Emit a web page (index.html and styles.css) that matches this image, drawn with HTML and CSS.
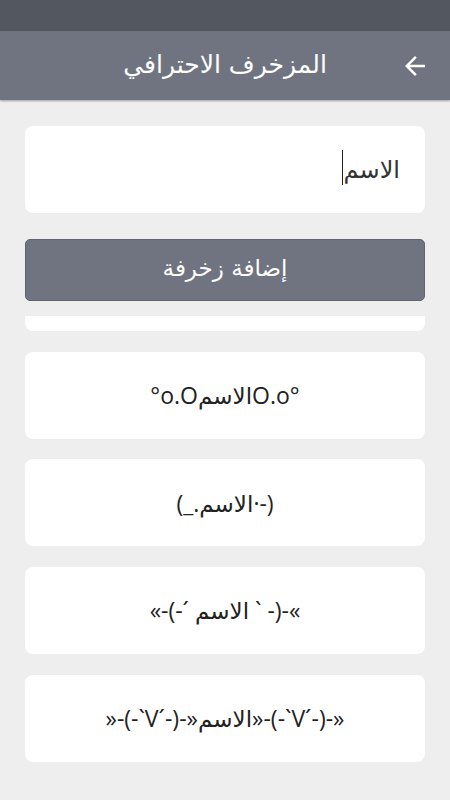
FILE: index.html
```html
<!DOCTYPE html>
<html lang="ar">
<head>
<meta charset="utf-8">
<link rel="stylesheet" href="styles.css">
</head>
<body>
<div class="status"></div>
<header class="appbar">
  <span></span>
  <h1 class="title" dir="rtl">المزخرف الاحترافي</h1>
  <span class="back">
    <svg width="30" height="30" viewBox="0 0 24 24"><path fill="#fff" d="M20 11H7.83l5.59-5.59L12 4l-8 8 8 8 1.41-1.41L7.83 13H20v-2z"/></svg>
  </span>
</header>
<main class="content">
  <div class="field">
    <span class="caret"></span>
    <span class="field-text">الاسم</span>
  </div>
  <button class="add">إضافة زخرفة</button>
  <div class="list">
    <div class="inner">
      <div class="card"></div>
      <div class="card">°o.OالاسمO.o°</div>
      <div class="card">(_.الاسم·-)</div>
      <div class="card">«-(-´ الاسم ` -)-«</div>
      <div class="card">»-(-`V´-)-»الاسم»-(-`V´-)-»</div>
    </div>
  </div>
</main>
</body>
</html>
```
FILE: styles.css
```css
html, body {
  margin: 0;
  padding: 0;
}
body {
  width: 450px;
  height: 800px;
  overflow: hidden;
  background: #eeeeee;
  font-family: "Open Sans", "DejaVu Sans", sans-serif;
}
.status {
  height: 31px;
  background: #53575f;
}
.appbar {
  height: 69px;
  background: #6f7480;
  display: grid;
  grid-template-columns: 1fr auto 1fr;
  align-items: center;
  box-shadow: 0 1px 2px rgba(0, 0, 0, 0.35);
  position: relative;
}
.title {
  margin: 0;
  color: #ffffff;
  font-family: "DejaVu Sans", sans-serif;
  font-weight: normal;
  font-size: 25px;
  line-height: 30px;
  padding-bottom: 2px;
}
.back {
  justify-self: end;
  display: flex;
  padding-right: 20px;
}
.content {
  padding: 0 25px;
}
.field {
  margin-top: 26px;
  height: 87px;
  background: #ffffff;
  border-radius: 8px;
  display: flex;
  justify-content: flex-end;
  align-items: center;
  padding-right: 25px;
  box-sizing: border-box;
}
.caret {
  width: 1px;
  height: 35px;
  background: #222;
  margin-right: 1px;
  margin-top: -4px;
}
.field-text {
  font-family: "DejaVu Sans", sans-serif;
  font-size: 24px;
  color: #333;
  line-height: 30px;
}
.add {
  display: block;
  width: 100%;
  margin-top: 26px;
  height: 62px;
  background: #6f7480;
  border: 1px solid #60646e;
  border-radius: 5px;
  color: #ffffff;
  font-family: "DejaVu Sans", sans-serif;
  font-size: 23px;
  padding: 0 0 4px;
}
.list {
  margin-top: 15px;
  height: 484px;
  overflow: hidden;
}
.inner {
  display: flex;
  flex-direction: column;
  gap: 20.67px;
  margin-top: -72px;
}
.card {
  height: 87px;
  flex: none;
  background: #ffffff;
  border-radius: 8px;
  display: flex;
  justify-content: center;
  align-items: center;
  font-size: 23px;
  color: #222;
  direction: ltr;
  white-space: nowrap;
}
```
